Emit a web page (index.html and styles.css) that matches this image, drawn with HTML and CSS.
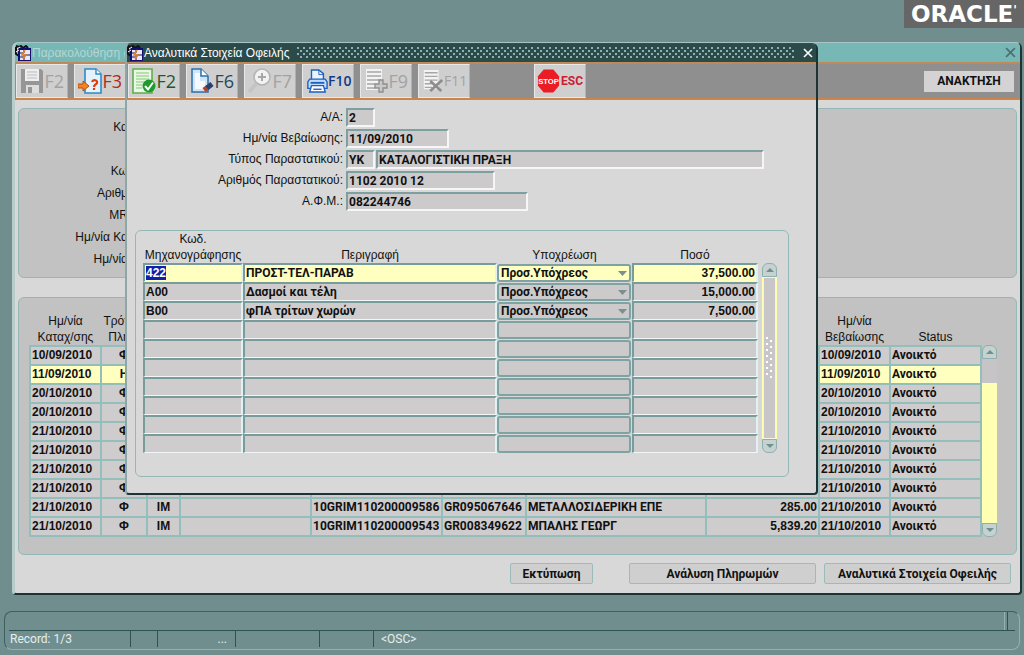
FILE: index.html
```html
<!DOCTYPE html>
<html lang="el">
<head>
<meta charset="utf-8">
<meta name="viewport" content="width=device-width, initial-scale=1">
<title>Αναλυτικά Στοιχεία Οφειλής</title>
<link rel="stylesheet" href="styles.css">
</head>
<body>
<svg class="defs" aria-hidden="true">
  <symbol id="app" viewBox="0 0 16 16">
    <path d="M1 1l3 1 2-1 2 2 3-2 2 2" fill="none" stroke="#111" stroke-width="2"/>
    <path d="M1 2v7l3 2" fill="none" stroke="#111" stroke-width="2"/>
    <rect x="3" y="3" width="13" height="13" fill="#10106c"/>
    <rect x="5" y="5" width="10" height="10" fill="#e8e8ff"/>
    <path d="M5 8h4V5M9 15v-5h6M5 12h3" stroke="#10106c" fill="none"/>
    <path d="M10 5l-3 5h4l-3 4" stroke="#e08020" stroke-width="1.500" fill="none"/>
    <path d="M2 4l3-2M1 7l3-2" stroke="#fff"/>
  </symbol>
  <symbol id="close" viewBox="0 0 10 10"><path d="M1 1l8 8M9 1L1 9" stroke="currentColor" stroke-width="1.6"/></symbol>
  <symbol id="up" viewBox="0 0 8 6"><path d="M4 1l4 4H0z" fill="#6f8f90"/></symbol>
  <symbol id="down" viewBox="0 0 8 6"><path d="M4 5l4-4H0z" fill="#6f8f90"/></symbol>
</svg>

<header class="brand"><div class="logo">ORACLE<span class="tick">'</span></div></header>

<main class="desktop">
  <section class="window back" aria-label="Παρακολούθηση">
    <div class="titlebar">
      <svg class="app"><use href="#app"/></svg><span class="title">Παρακολούθηση (</span>
      <button class="close" aria-label="Κλείσιμο παρακολούθησης"><svg><use href="#close"/></svg></button>
    </div>
    <div class="toolbar">
      <button class="tool off"><svg viewBox="0 0 24 28"><path d="M1 2h20l2 2v22H1z" fill="#969696"/><path d="M5 2h14v12H5z" fill="#eee"/><path d="M7 5h10M7 8h10M7 11h10" stroke="#bbb"/><path d="M6 18h13v8H6z" fill="#ddd"/><path d="M8 20h4v6H8z" fill="#969696"/></svg>F2</button>
      <button class="tool red"><svg viewBox="0 0 24 28"><path d="M7 2h11l5 5v19H7z" fill="#e4f3fb" stroke="#2b8cc8" stroke-width="1.6"/><path d="M18 2v5h5" fill="#fff" stroke="#2b8cc8" stroke-width="1.4"/><path d="M14 15c1-3 6-2 5 1-1 2-3 1-3 4M16 21v2" fill="none" stroke="#e03c10" stroke-width="2.2"/><path d="M0 17h5v-3l6 5-6 5v-3H0z" fill="#f58220" stroke="#b8500c"/></svg>F3</button>
      <button class="plain">ΑΝΑΚΤΗΣΗ</button>
    </div>
    <div class="content">
      <div class="panel criteria">
        <span>Κα</span><span></span><span>Κω</span><span>Αριθμ</span><span>MR</span><span>Ημ/νία Κα</span><span>Ημ/νία</span>
      </div>
      <div class="panel records">
        <table class="grid">
          <colgroup><col class="w71"><col class="w46"><col class="w33"><col class="w131"><col class="w131"><col class="w84"><col><col class="w113"><col class="w71"><col class="w91"></colgroup>
          <thead><tr><th>Ημ/νία<br>Καταχ/σης</th><th>Τρόπος<br>Πληρ.</th><th></th><th></th><th></th><th></th><th></th><th></th><th>Ημ/νία<br>Βεβαίωσης</th><th>Status</th></tr></thead>
          <tbody>
            <tr><td>10/09/2010</td><td class="c">Φ</td><td></td><td></td><td></td><td></td><td></td><td></td><td>10/09/2010</td><td class="gr">Ανοικτό</td></tr>
            <tr class="current"><td>11/09/2010</td><td class="c">Η</td><td></td><td></td><td></td><td></td><td></td><td></td><td>11/09/2010</td><td class="gr">Ανοικτό</td></tr>
            <tr><td>20/10/2010</td><td class="c">Φ</td><td></td><td></td><td></td><td></td><td></td><td></td><td>20/10/2010</td><td class="gr">Ανοικτό</td></tr>
            <tr><td>20/10/2010</td><td class="c">Φ</td><td></td><td></td><td></td><td></td><td></td><td></td><td>20/10/2010</td><td class="gr">Ανοικτό</td></tr>
            <tr><td>21/10/2010</td><td class="c">Φ</td><td></td><td></td><td></td><td></td><td></td><td></td><td>21/10/2010</td><td class="gr">Ανοικτό</td></tr>
            <tr><td>21/10/2010</td><td class="c">Φ</td><td></td><td></td><td></td><td></td><td></td><td></td><td>21/10/2010</td><td class="gr">Ανοικτό</td></tr>
            <tr><td>21/10/2010</td><td class="c">Φ</td><td></td><td></td><td></td><td></td><td></td><td></td><td>21/10/2010</td><td class="gr">Ανοικτό</td></tr>
            <tr><td>21/10/2010</td><td class="c">Φ</td><td></td><td></td><td></td><td></td><td></td><td></td><td>21/10/2010</td><td class="gr">Ανοικτό</td></tr>
            <tr><td>21/10/2010</td><td class="c">Φ</td><td class="c">IM</td><td></td><td class="gr">10GRIM110200009586</td><td class="gr">GR095067646</td><td class="gr">ΜΕΤΑΛΛΟΣΙΔΕΡΙΚΗ ΕΠΕ</td><td class="n">285.00</td><td>21/10/2010</td><td class="gr">Ανοικτό</td></tr>
            <tr><td>21/10/2010</td><td class="c">Φ</td><td class="c">IM</td><td></td><td class="gr">10GRIM110200009543</td><td class="gr">GR008349622</td><td class="gr">ΜΠΑΛΗΣ ΓΕΩΡΓ</td><td class="n">5,839.20</td><td>21/10/2010</td><td class="gr">Ανοικτό</td></tr>
          </tbody>
        </table>
        <div class="scroll short"><button aria-label="Πάνω"><svg><use href="#up"/></svg></button><div class="track"><div class="thumb"></div></div><button aria-label="Κάτω"><svg><use href="#down"/></svg></button></div>
      </div>
      <div class="actions">
        <button class="outlined small">Εκτύπωση</button><button class="outlined">Ανάλυση Πληρωμών</button><button class="outlined">Αναλυτικά Στοιχεία Οφειλής</button>
      </div>
    </div>
  </section>

  <section class="window front" role="dialog" aria-label="Αναλυτικά Στοιχεία Οφειλής">
    <div class="titlebar">
      <svg class="app"><use href="#app"/></svg><span class="title">Αναλυτικά Στοιχεία Οφειλής</span><span class="dots"></span>
      <button class="close" aria-label="Κλείσιμο"><svg><use href="#close"/></svg></button>
    </div>
    <div class="toolbar">
      <button class="tool green"><svg viewBox="0 0 24 28"><path d="M1 2h19v24H1z" fill="#e9f7e4" stroke="#5fae4e" stroke-width="1.6"/><path d="M4 6h13M4 9h13M4 12h13M4 15h8M4 18h6M4 21h6" stroke="#86c578"/><circle cx="17" cy="19" r="6.5" fill="#1f9a2c"/><path d="M13 19l3 3.500 5-7" fill="none" stroke="#fff" stroke-width="2"/></svg>F2</button>
      <button class="tool navy"><svg viewBox="0 0 24 28"><path d="M2 2h9l7 7v16H2z" fill="#cfe6f7" stroke="#2e6fa8" stroke-width="1.5"/><path d="M5 6h5v8h5v8H5z" fill="#f4faff"/><path d="M11 2v7h7" fill="#fff" stroke="#2e6fa8" stroke-width="1.500"/><path d="M14 23l4-3" stroke="#b0442c" stroke-width="5"/><path d="M17 21l5-4" stroke="#2a3f6a" stroke-width="5"/></svg>F6</button>
      <button class="tool off"><svg viewBox="0 0 24 28"><path d="M8 17l-7 8" stroke="#c4c4c4" stroke-width="4"/><circle cx="14" cy="10" r="8" fill="#f2f2f2" stroke="#b4b4b4" stroke-width="1.6"/><path d="M10 10h8M14 6v8" stroke="#a8a8a8" stroke-width="2"/></svg>F7</button>
      <button class="tool blue"><svg viewBox="0 0 24 28"><path d="M6 13V2h8l5 4v7" fill="#eaf4ff" stroke="#1d5fc4" stroke-width="1.500"/><path d="M14 2v5h5" fill="none" stroke="#1d5fc4"/><path d="M4 12h17l2 3v7H2v-7z" fill="#bfdcf8" stroke="#1d5fc4" stroke-width="1.500"/><path d="M5 16h15" stroke="#1d5fc4" stroke-width="2"/><path d="M6 19h13l2 7H4z" fill="#fff" stroke="#1d5fc4" stroke-width="1.500"/><path d="M8 23h9" stroke="#1d5fc4" stroke-width="1.500"/></svg>F10</button>
      <button class="tool off"><svg viewBox="0 0 24 28"><path d="M2 2h16v21H2z" fill="#f3f3f3"/><path d="M3 5h14M3 9h14M3 13h14M3 17h8M3 21h8" stroke="#a6a6a6" stroke-width="1.500"/><path d="M15 13h4v4h4v4h-4v4h-4v-4h-4v-4h4z" fill="#c8c8c8" stroke="#8f8f8f" stroke-width="1.400"/></svg>F9</button>
      <button class="tool off"><svg viewBox="0 0 24 28"><path d="M2 2h16v21H2z" fill="#f3f3f3"/><path d="M3 5h14M3 9h14M3 13h14M3 17h8M3 21h8" stroke="#a6a6a6" stroke-width="1.500"/><path d="M9 14l12 11M22 13L9 25" stroke="#8d8d8d" stroke-width="3"/></svg>F11</button>
      <button class="tool esc"><svg viewBox="0 0 24 28"><path d="M7 2h10l6 7v10l-6 7H7l-6-7V9z" fill="#ec1c24"/><text x="12" y="17" text-anchor="middle" class="stop">STOP</text></svg>ESC</button>
    </div>
    <div class="content">
      <div class="fields">
        <label for="aa">Α/Α:</label><div><input id="aa" class="f29" value="2"></div>
        <label for="date">Ημ/νία Βεβαίωσης:</label><div><input id="date" class="f103" value="11/09/2010"></div>
        <label for="type">Τύπος Παραστατικού:</label><div><input id="type" class="f29" value="ΥΚ"><input class="f388" aria-label="Περιγραφή τύπου" value="ΚΑΤΑΛΟΓΙΣΤΙΚΗ ΠΡΑΞΗ"></div>
        <label for="num">Αριθμός Παραστατικού:</label><div><input id="num" class="f149" value="1102 2010 12"></div>
        <label for="afm">Α.Φ.Μ.:</label><div><input id="afm" class="f182" value="082244746"></div>
      </div>
      <div class="panel debts">
        <table class="grid sunken">
          <colgroup><col class="w100"><col><col class="w135"><col class="w126"></colgroup>
          <thead><tr><th>Κωδ.<br>Μηχανογράφησης</th><th>Περιγραφή</th><th>Υποχρέωση</th><th>Ποσό</th></tr></thead>
          <tbody>
            <tr class="current"><td><span class="sel">422</span></td><td class="gr">ΠΡΟΣΤ-ΤΕΛ-ΠΑΡΑΒ</td><td class="pick"><select aria-label="Υποχρέωση 1"><option>Προσ.Υπόχρεος</option></select></td><td class="n">37,500.00</td></tr>
            <tr><td>A00</td><td class="gr">Δασμοί και τέλη</td><td class="pick"><select aria-label="Υποχρέωση 2"><option>Προσ.Υπόχρεος</option></select></td><td class="n">15,000.00</td></tr>
            <tr><td>B00</td><td class="gr">φΠΑ τρίτων χωρών</td><td class="pick"><select aria-label="Υποχρέωση 3"><option>Προσ.Υπόχρεος</option></select></td><td class="n">7,500.00</td></tr>
            <tr><td></td><td></td><td class="pick"><select class="none" aria-label="Υποχρέωση 4"></select></td><td></td></tr>
            <tr><td></td><td></td><td class="pick"><select class="none" aria-label="Υποχρέωση 5"></select></td><td></td></tr>
            <tr><td></td><td></td><td class="pick"><select class="none" aria-label="Υποχρέωση 6"></select></td><td></td></tr>
            <tr><td></td><td></td><td class="pick"><select class="none" aria-label="Υποχρέωση 7"></select></td><td></td></tr>
            <tr><td></td><td></td><td class="pick"><select class="none" aria-label="Υποχρέωση 8"></select></td><td></td></tr>
            <tr><td></td><td></td><td class="pick"><select class="none" aria-label="Υποχρέωση 9"></select></td><td></td></tr>
            <tr><td></td><td></td><td class="pick"><select class="none" aria-label="Υποχρέωση 10"></select></td><td></td></tr>
          </tbody>
        </table>
        <div class="scroll full"><button aria-label="Πάνω"><svg><use href="#up"/></svg></button><div class="track"><div class="thumb"><span class="grip"></span></div></div><button aria-label="Κάτω"><svg><use href="#down"/></svg></button></div>
      </div>
    </div>
  </section>
</main>

<footer class="status">
  <div class="message"></div>
  <div class="cells"><span class="s1">Record: 1/3</span><span class="s2"></span><span class="s3">...</span><span class="s4"></span><span class="s5"></span><span class="s6">&lt;OSC&gt;</span></div>
</footer>
</body>
</html>
```
FILE: styles.css
```css
* { box-sizing: border-box; }
body {
  margin: 0;
  min-height: 100vh;
  display: flex;
  flex-direction: column;
  background: #708e8e;
  font: 12px/18px Roboto, "Liberation Sans", Arial, sans-serif;
  color: #111;
}
button, input, select { font: inherit; color: inherit; margin: 0; }
button { padding: 0; border: 0; background: none; }
.defs { display: none; }

.brand { display: flex; justify-content: flex-end; height: 28px; }
.logo {
  width: 120px;
  background: #666;
  color: #fff;
  text-align: center;
  white-space: nowrap;
  font: bold 23px/28px "DejaVu Sans", sans-serif;
}
.tick { font-size: 12px; vertical-align: top; line-height: 20px; }

.desktop { position: relative; padding: 14px 2px 16px 12px; }
.window {
  display: flex;
  flex-direction: column;
  background: #d8d8d8;
  border: 1px solid #a9c4c4;
  border-left: 3px solid #b9cccc;
  border-right: 2px solid #1c3434;
  border-bottom: 2px solid #1c3434;
  border-radius: 6px 6px 4px 4px;
}
.front {
  position: absolute;
  left: 125px;
  top: 15px;
  width: 693px;
  border-top-color: #2f4f4f;
  border-left-color: #8fa6a6;
  border-left-width: 2px;
}
.titlebar {
  display: flex;
  align-items: center;
  height: 19px;
  padding: 0 4px 0 0;
  background: #77b8b6;
  color: #b4d6d4;
  border-radius: 4px 4px 0 0;
}
.front .titlebar { height: 18px; background: #2b4a4a; color: #fff; padding-right: 3px; }
.app { width: 16px; height: 16px; flex: none; margin-right: 1px; }
.title { font: 12px/18px "Liberation Sans", Arial, sans-serif; white-space: nowrap; }
.dots {
  flex: 1;
  height: 12px;
  margin: 0 8px;
  background-image: radial-gradient(circle at 1px 1px, #8fb0b0 1px, transparent 1px), radial-gradient(circle at 4px 4px, #8fb0b0 1px, transparent 1px);
  background-size: 6px 6px;
}
.close { display: flex; margin-left: auto; color: #4f7070; }
.front .close { color: #fff; }
.close svg { width: 10px; height: 10px; }
.back .close svg { width: 11px; height: 11px; }

.toolbar {
  display: flex;
  align-items: center;
  gap: 6px;
  height: 38px;
  padding: 0 6px 0 1px;
  background: #8f8f8f;
  border-top: 2px solid #c08a58;
  border-bottom: 2px solid #cc8448;
}
.tool {
  display: flex;
  align-items: center;
  justify-content: space-between;
  width: 52px;
  height: 34px;
  padding: 0 3px;
  background: #cfcfcf;
  border: 1px solid #e8e8e8;
  border-right-color: #aab4b4;
  font: 18px/28px "Open Sans", "Liberation Sans", sans-serif;
}
.tool svg { width: 24px; height: 28px; flex: none; }
.off { color: #a2a2a2; }
.red { color: #b8281c; }
.green { color: #1d5a2a; }
.navy { color: #27485c; }
.blue { color: #173a86; }
.blue, .tool:nth-child(6) { font-size: 14px; }
.blue { font-weight: 600; }
.blue svg, .tool:nth-child(6) svg { width: 22px; }
.esc { margin-left: 58px; padding: 0 2px; color: #cc2032; font: bold 12px/28px Roboto, sans-serif; }
.esc svg { width: 23px; }
.stop { font: bold 8px "Liberation Sans", sans-serif; fill: #fff; }
.plain {
  width: 90px;
  height: 21px;
  margin-left: auto;
  background: #d4d2d3;
  font-weight: bold;
}

.panel { border: 1px solid #94b8b8; border-radius: 6px; }
.back .content { padding: 8px 3px 9px; }
.back .panel { background: #c2c2c2; }
.criteria {
  display: grid;
  grid-auto-rows: 22px;
  padding: 7px 0;
  width: 100%;
}
.criteria span, .grid th, .fields label { font-family: "Liberation Sans", Arial, sans-serif; }
.criteria span { width: 109px; text-align: right; line-height: 22px; }
.records { display: flex; align-items: flex-end; margin-top: 19px; padding: 15px 19px 17px 10px; }

.grid { flex: 1; border-collapse: collapse; table-layout: fixed; width: 0; }
.grid th { padding: 0; font-weight: normal; line-height: 16px; vertical-align: bottom; white-space: nowrap; }
.grid td {
  height: 19px;
  padding: 0 1px;
  border: 2px solid #94bebb;
  background: #cecccd;
  font-weight: bold;
  font-family: "Liberation Sans", Arial, sans-serif;
  line-height: 17px;
  white-space: nowrap;
}
.grid .gr { font-family: Roboto, "Liberation Sans", sans-serif; }
.grid .c { text-align: center; }
.grid .n { text-align: right; }
.grid .current td { background: #ffffc0; }
.w33 { width: 33px; } .w46 { width: 46px; } .w71 { width: 71px; } .w84 { width: 84px; }
.w91 { width: 91px; } .w100 { width: 100px; } .w113 { width: 113px; } .w126 { width: 126px; }
.w131 { width: 131px; } .w135 { width: 135px; }

.scroll { display: flex; flex-direction: column; flex: none; width: 15px; height: 192px; }
.scroll button {
  display: flex;
  align-items: center;
  justify-content: center;
  height: 14px;
  background: #c6d2d0;
  border: 1px solid #8fb0b0;
  border-radius: 6px 6px 0 0;
}
.scroll button:last-child { border-radius: 0 0 6px 6px; }
.scroll svg { width: 8px; height: 6px; }
.track { flex: 1; background: #ffffb4; }
.short .thumb { height: 24px; background: #c6c4c6; }
.full .thumb {
  display: flex;
  align-items: center;
  justify-content: center;
  height: 100%;
  margin: 0 1px;
  background: #c8c6c8;
  border: 1px solid #f4f4e0;
}
.grip {
  width: 8px;
  height: 42px;
  background-image: radial-gradient(circle at 1px 1px, #fff 1px, transparent 1px), radial-gradient(circle at 5px 4px, #fff 1px, transparent 1px);
  background-size: 8px 6px;
}

.actions { display: flex; justify-content: flex-end; gap: 8px; padding: 8px 6px 0; }
.outlined {
  width: 187px;
  height: 21px;
  background: #cfcfcf;
  border: 1px solid #9abcba;
  border-radius: 2px;
  font-weight: bold;
}
.small { width: 83px; margin-right: 28px; }

.front .content { padding: 8px 27px 16px 8px; }
.fields { display: grid; grid-template-columns: 208px 1fr; gap: 2px 3px; }
.fields label { text-align: right; line-height: 19px; }
.fields div { display: flex; gap: 1px; }
.fields input {
  height: 19px;
  padding: 0 1px;
  background: #cccacb;
  border: 2px solid #7d9f9f;
  border-right-color: #f6f6f6;
  border-bottom-color: #f6f6f6;
  font-weight: bold;
}
.f29 { width: 29px; } .f103 { width: 103px; } .f149 { width: 149px; } .f182 { width: 182px; } .f388 { width: 388px; }

.debts { display: flex; align-items: flex-end; gap: 4px; margin-top: 19px; padding: 0 11px 23px 7px; }
.full { height: 190px; }
.sunken { border-collapse: separate; border-spacing: 0; }
.sunken td {
  border: 2px solid #789c9c;
  border-right-color: #e2f2f2;
  border-bottom: 1px solid #f2f6f6;
  padding: 0 1px;
  line-height: 16px;
}
.sunken .pick { padding: 0; border: 0; background: none; }
.sunken .current .pick { background: none; }
.sunken select {
  display: block;
  width: 134px;
  height: 18px;
  padding: 0 2px;
  appearance: none;
  border: 2px solid #7fa2a2;
  border-radius: 3px;
  background: #cccacb url("data:image/svg+xml,%3Csvg xmlns='http://www.w3.org/2000/svg' width='13' height='14'%3E%3Cpath d='M2 5h9l-4.500 5z' fill='%237b8f8f'/%3E%3C/svg%3E") right center no-repeat;
  font: bold 12px/14px Roboto, "Liberation Sans", sans-serif;
}
.sunken .current select { background-color: #ffffc0; }
.sunken .none { background-image: none; }
.sel { background: #1020a8; color: #fff; }

.status {
  margin: 0 4px;
  height: 39px;
  border: 1px solid #3f6060;
  border-right-color: #94b0b0;
  border-bottom-color: #94b0b0;
  border-radius: 8px;
  padding: 0 4px;
  color: #e4eeee;
}
.message { height: 19px; margin: 0; border-bottom: 1px solid #2f5252; padding-right: 7px; display: flex; justify-content: flex-end; }
.message::after { content: ""; width: 2px; border-left: 1px solid #94b0b0; border-right: 1px solid #2f5252; }
.cells { display: flex; height: 16px; line-height: 17px; }
.cells span { border-right: 1px solid #2f5252; padding: 0 1px; }
.s1 { width: 122px; } .s2 { width: 27px; } .s3 { width: 78px; } .s4 { width: 84px; } .s5 { width: 54px; }
.cells .s3 { text-align: right; padding-right: 8px; }
.cells .s6 { flex: 1; border: 0; padding-left: 7px; }
```
